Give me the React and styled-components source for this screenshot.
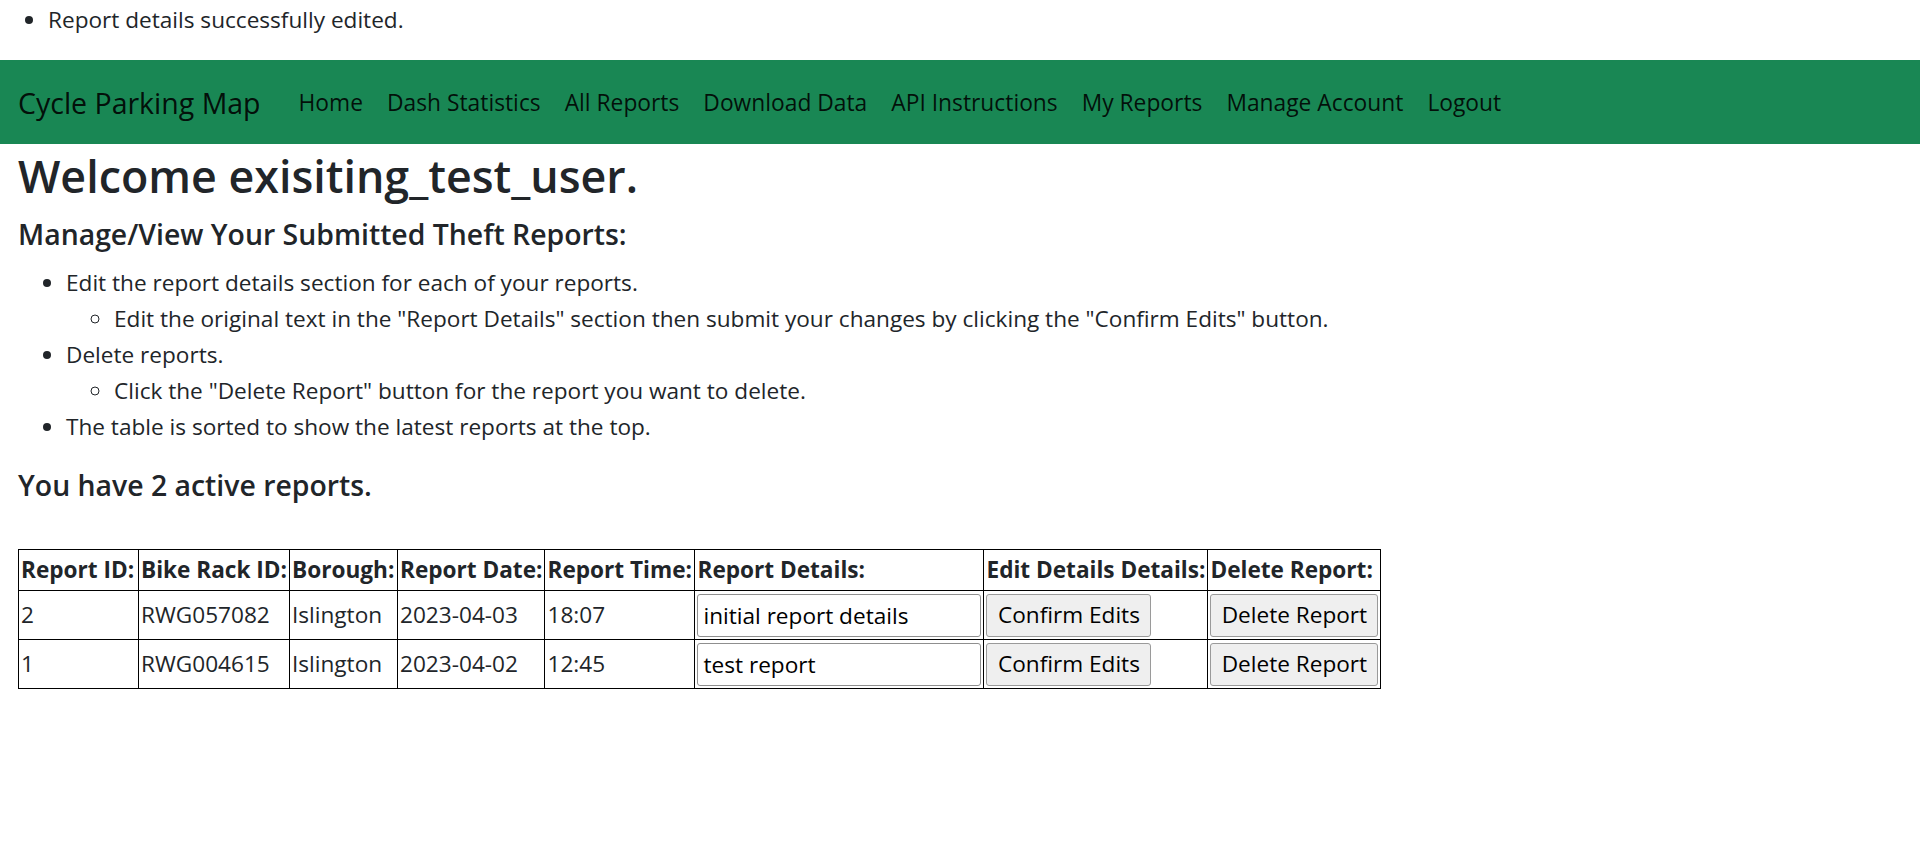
import React from "react";
import styled, { createGlobalStyle } from "styled-components";

const GlobalStyle = createGlobalStyle`
  body {
    margin: 0;
    background: #fff;
    color: #212529;
    font-family: "Open Sans", "Noto Sans", Arial, sans-serif;
    font-size: 22.6px;
    line-height: 36px;
  }
`;

const Flash = styled.ul`
  margin: 0;
  padding: 2px 0 22px 48px;
`;

const Navbar = styled.nav`
  display: flex;
  align-items: center;
  height: 84px;
  padding: 2px 18px 0;
  box-sizing: border-box;
  background: #198754;
`;

const Brand = styled.a`
  font-size: 28.5px;
  color: rgba(0, 0, 0, 0.9);
  margin-right: 38px;
  text-decoration: none;
`;

const NavLinks = styled.div`
  display: flex;
  gap: 24px;
`;

const NavLink = styled.a`
  font-size: 22.8px;
  color: rgba(0, 0, 0, 0.88);
  text-decoration: none;
`;

const Main = styled.main`
  padding: 0 18px;
`;

const Title = styled.h1`
  margin: 2px 0 0;
  font-size: 44.8px;
  line-height: 60px;
  font-weight: 600;
`;

const Heading = styled.h4`
  margin: ${(p) => p.$m};
  font-size: 28.4px;
  line-height: 36px;
  font-weight: 600;
`;

const Steps = styled.ul`
  margin: 0 0 22px;
  padding-left: 48px;
  ul {
    margin: 0;
    padding-left: 48px;
    list-style-type: circle;
  }
`;

const Table = styled.table`
  border-collapse: collapse;
  table-layout: fixed;
  border: 1px solid #000;
`;

const Head = styled.th`
  border: 1px solid #000;
  padding: 0 2px;
  height: 40px;
  text-align: left;
  font-weight: 700;
  white-space: nowrap;
  overflow: hidden;
  width: ${(p) => p.$w - 5}px;
`;

const Cell = styled.td`
  border: 1px solid #000;
  padding: 0 2px;
  height: 48px;
  white-space: nowrap;
`;

const DetailsInput = styled.input`
  box-sizing: border-box;
  width: 284px;
  height: 43px;
  margin: 0;
  padding: 0 5px;
  border: 1px solid #8f8f8f;
  border-radius: 3px;
  font: inherit;
  color: #000;
  display: block;
`;

const Button = styled.button`
  box-sizing: border-box;
  height: 43px;
  margin: 0;
  padding: 0 8px;
  border: 1px solid #9a9a9a;
  border-radius: 3px;
  background: #efefef;
  font: inherit;
  color: #000;
  display: block;
  white-space: nowrap;
  width: ${(p) => p.$w}px;
`;

const columns = [
  ["Report ID:", 120],
  ["Bike Rack ID:", 151],
  ["Borough:", 108],
  ["Report Date:", 147],
  ["Report Time:", 150],
  ["Report Details:", 288],
  ["Edit Details Details:", 221],
  ["Delete Report:", 171],
];

const reports = [
  { id: 2, rack: "RWG057082", borough: "Islington", date: "2023-04-03", time: "18:07", details: "initial report details" },
  { id: 1, rack: "RWG004615", borough: "Islington", date: "2023-04-02", time: "12:45", details: "test report" },
];

const links = ["Home", "Dash Statistics", "All Reports", "Download Data", "API Instructions", "My Reports", "Manage Account", "Logout"];

export default function App() {
  return (
    <>
      <GlobalStyle />
      <Flash>
        <li>Report details successfully edited.</li>
      </Flash>
      <Navbar>
        <Brand href="#">Cycle Parking Map</Brand>
        <NavLinks>
          {links.map((l) => (
            <NavLink key={l} href="#">{l}</NavLink>
          ))}
        </NavLinks>
      </Navbar>
      <Main>
        <Title>Welcome exisiting_test_user.</Title>
        <Heading $m="10px 0 13px">Manage/View Your Submitted Theft Reports:</Heading>
        <Steps>
          <li>
            Edit the report details section for each of your reports.
            <ul>
              <li>Edit the original text in the "Report Details" section then submit your changes by clicking the "Confirm Edits" button.</li>
            </ul>
          </li>
          <li>
            Delete reports.
            <ul>
              <li>Click the "Delete Report" button for the report you want to delete.</li>
            </ul>
          </li>
          <li>The table is sorted to show the latest reports at the top.</li>
        </Steps>
        <Heading $m="0 0 46px">You have 2 active reports.</Heading>
        <Table>
          <thead>
            <tr>
              {columns.map(([label, w]) => (
                <Head key={label} $w={w}>{label}</Head>
              ))}
            </tr>
          </thead>
          <tbody>
            {reports.map((r) => (
              <tr key={r.id}>
                <Cell>{r.id}</Cell>
                <Cell>{r.rack}</Cell>
                <Cell>{r.borough}</Cell>
                <Cell>{r.date}</Cell>
                <Cell>{r.time}</Cell>
                <Cell>
                  <DetailsInput defaultValue={r.details} />
                </Cell>
                <Cell>
                  <Button $w={165}>Confirm Edits</Button>
                </Cell>
                <Cell>
                  <Button $w={168}>Delete Report</Button>
                </Cell>
              </tr>
            ))}
          </tbody>
        </Table>
      </Main>
    </>
  );
}
